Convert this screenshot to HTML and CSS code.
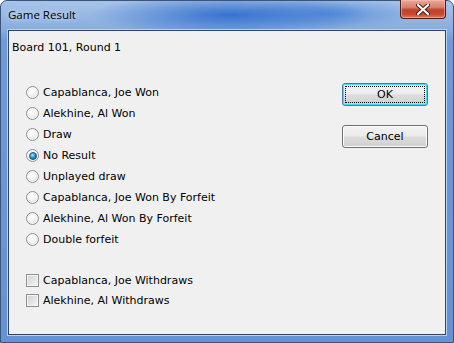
FILE: index.html
```html
<!DOCTYPE html>
<html lang="en">
<head>
    <meta charset="UTF-8">
    <title>Game Result</title>
    <link rel="stylesheet" href="styles.css">
</head>
<body>
    <div class="window">
        <div class="titlebar">
            <span class="title">Game Result</span>
            <button class="close-btn">
                <svg width="14" height="11" viewBox="0 0 14 11">
                    <path d="M2 1 L12 10 M12 1 L2 10" stroke="#3a1a14" stroke-width="4" stroke-linecap="round"/>
                    <path d="M2 1 L12 10 M12 1 L2 10" stroke="#ffffff" stroke-width="2.2" stroke-linecap="round"/>
                </svg>
            </button>
        </div>

        <div class="client">
            <div class="board">Board 101, Round 1</div>

            <div class="content">
                <div class="options">
                    <div class="radios">
                        <label class="opt"><span class="radio"></span>Capablanca, Joe Won</label>
                        <label class="opt"><span class="radio"></span>Alekhine, Al Won</label>
                        <label class="opt"><span class="radio"></span>Draw</label>
                        <label class="opt"><span class="radio checked"></span>No Result</label>
                        <label class="opt"><span class="radio"></span>Unplayed draw</label>
                        <label class="opt"><span class="radio"></span>Capablanca, Joe Won By Forfeit</label>
                        <label class="opt"><span class="radio"></span>Alekhine, Al Won By Forfeit</label>
                        <label class="opt"><span class="radio"></span>Double forfeit</label>
                    </div>
                    <div class="checks">
                        <label class="opt"><span class="check"></span>Capablanca, Joe Withdraws</label>
                        <label class="opt"><span class="check"></span>Alekhine, Al Withdraws</label>
                    </div>
                </div>

                <div class="buttons">
                    <button class="btn default"><span class="focus">OK</span></button>
                    <button class="btn">Cancel</button>
                </div>
            </div>
        </div>
    </div>
</body>
</html>
```

FILE: styles.css
```css
html, body {
    margin: 0;
    padding: 0;
    background: #ffffff;
}
.window {
    width: 454px;
    height: 343px;
    box-sizing: border-box;
    border: 1px solid #3a5579;
    border-radius: 7px 7px 0 0;
    padding: 0 7px 7px 7px;
    display: flex;
    flex-direction: column;
    background:
        radial-gradient(ellipse 140px 22px at 230px 14px, rgba(20, 90, 200, 0.75), rgba(20, 90, 200, 0) 100%),
        radial-gradient(ellipse 90px 16px at 330px 12px, rgba(40, 110, 210, 0.5), rgba(40, 110, 210, 0) 100%),
        linear-gradient(to bottom, #a7c3e8 0px, #88ade0 28px, #6f9ad8 40px, #6592d4 100%);
}
.titlebar {
    height: 29px;
    display: flex;
    align-items: flex-start;
    justify-content: space-between;
}
.title {
    font-family: "Open Sans", "DejaVu Sans", sans-serif;
    font-size: 11.5px;
    color: #000000;
    margin-top: 6px;
    text-shadow: 0 0 6px rgba(255, 255, 255, 0.9);
}
.close-btn {
    width: 46px;
    height: 19px;
    margin-top: -1px;
    margin-right: 0;
    padding: 0;
    border: 1px solid #4a1d17;
    border-top: none;
    border-radius: 0 0 4px 4px;
    background: linear-gradient(to bottom, #e9a898 0%, #d9826d 40%, #c0412b 55%, #c84a33 80%, #e07d5f 100%);
    box-shadow: inset 0 0 0 1px rgba(255, 200, 190, 0.5);
    display: flex;
    align-items: center;
    justify-content: center;
}
.client {
    flex: 1;
    background: #f0f0f0;
    border: 1px solid #2c4664;
    box-shadow: 0 0 0 1px #b9d0ee;
    font-family: "DejaVu Sans", sans-serif;
    font-size: 11px;
    color: #000000;
    padding: 0 0 0 3px;
}
.board {
    margin-top: 10px;
    line-height: 13px;
}
.content {
    display: flex;
    justify-content: space-between;
    margin-top: 28px;
}
.options {
    padding-left: 14px;
}
.radios {
    display: flex;
    flex-direction: column;
}
.opt {
    display: flex;
    align-items: center;
    height: 21px;
    white-space: nowrap;
}
.checks {
    margin-top: 20px;
}
.checks .opt {
    height: 20px;
}
.radio {
    width: 11px;
    height: 11px;
    border: 1px solid #8e8f8f;
    border-radius: 50%;
    margin-right: 4px;
    background: radial-gradient(circle at 40% 35%, #ffffff 0%, #f4f4f4 40%, #d6d6d6 100%);
    box-shadow: inset 0 0 0 1px #f8f8f8;
    display: flex;
    align-items: center;
    justify-content: center;
}
.radio.checked::after {
    content: "";
    width: 6px;
    height: 6px;
    border-radius: 50%;
    border: 1px solid #1c4d76;
    background: radial-gradient(circle at 40% 35%, #b9e6ff 0%, #2f9ad8 45%, #0c4f8c 100%);
}
.check {
    width: 11px;
    height: 11px;
    border: 1px solid #8e8f8f;
    margin-right: 4px;
    background: linear-gradient(135deg, #d2d2d2 0%, #e6e6e6 60%, #f6f6f6 100%);
    box-shadow: inset 0 0 0 1px #f4f4f4;
}
.buttons {
    display: flex;
    flex-direction: column;
    gap: 19px;
    margin-right: 17px;
    margin-top: 1px;
}
.btn {
    width: 86px;
    height: 23px;
    border: 1px solid #707070;
    border-radius: 3px;
    background: linear-gradient(to bottom, #f2f2f2 0%, #ebebeb 48%, #dddddd 52%, #cfcfcf 100%);
    box-shadow: inset 0 0 0 1px #fcfcfc;
    font-family: "DejaVu Sans", sans-serif;
    font-size: 11px;
    color: #000000;
    padding: 0;
}
.btn.default {
    border-color: #3c7fb1;
    box-shadow: inset 0 0 0 1px #48d8fb;
    padding: 2px;
}
.focus {
    display: flex;
    align-items: center;
    justify-content: center;
    height: 100%;
    box-sizing: border-box;
    border: 1px dotted #000000;
}
```
